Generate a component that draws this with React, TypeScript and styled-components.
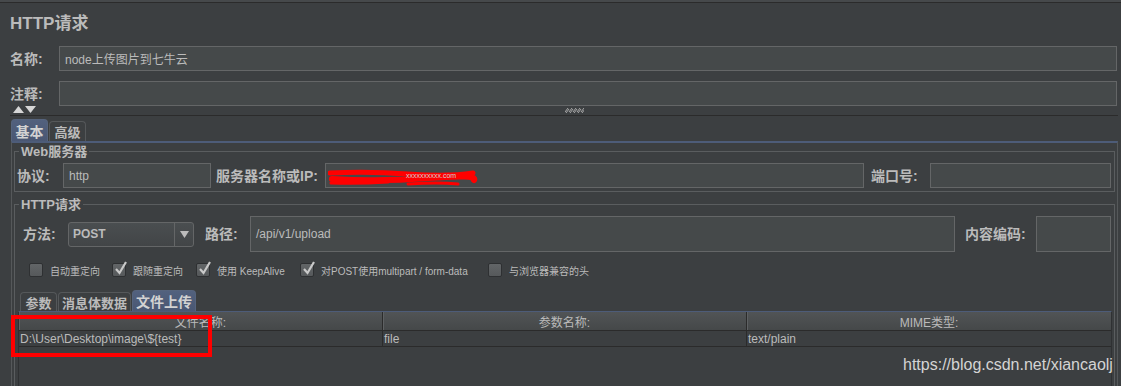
import styled, { createGlobalStyle } from 'styled-components';

const GlobalStyle = createGlobalStyle`
  html, body {
    margin: 0;
    padding: 0;
    background: #3c3f41;
  }
  body {
    font-family: "Liberation Sans", "Noto Sans CJK SC", sans-serif;
    color: #bbbbbb;
  }
  * { box-sizing: border-box; }
`;

const Page = styled.div`
  position: relative;
  width: 1121px;
  height: 386px;
  overflow: hidden;
  background: #3c3f41;
  box-shadow: inset 0 2px 0 #46494b, inset 0 3px 0 #2b2b2b;
`;

const Title = styled.div`
  margin: 12px 0 0 10px;
  height: 24px;
  line-height: 24px;
  font-size: 17px;
  font-weight: bold;
  color: #bbbbbb;
`;

const FieldRow = styled.div`
  display: flex;
  align-items: center;
  margin-top: 10px;
  padding: 0 4px 0 10px;
  height: 25px;
`;

const Label = styled.span<{ $w: number; $ml?: number }>`
  flex: none;
  width: ${({ $w }) => $w}px;
  margin-left: ${({ $ml }) => $ml ?? 0}px;
  margin-top: -2px;
  font-size: 14px;
  font-weight: bold;
  color: #bbbbbb;
  white-space: nowrap;
`;

const Input = styled.div<{ $w?: number; $h?: number }>`
  position: relative;
  flex: ${({ $w }) => ($w ? 'none' : '1')};
  width: ${({ $w }) => ($w ? `${$w}px` : 'auto')};
  height: ${({ $h }) => $h ?? 25}px;
  background: #45494a;
  border: 1px solid #646667;
  display: flex;
  align-items: center;
  padding-left: 5px;
  font-size: 12px;
  color: #bbbbbb;
  white-space: nowrap;
  overflow: hidden;
`;

const Splitter = styled.div`
  display: flex;
  align-items: center;
  margin-left: 10px;
  width: 1108px;
  height: 10px;
  border-bottom: 1px solid #2b2b2b;
`;

const Grip = styled.svg`
  margin-left: 528px;
`;

const TabStrip = styled.div<{ $ml: number; $h: number }>`
  display: flex;
  align-items: flex-end;
  margin: 0 0 0 ${({ $ml }) => $ml}px;
  height: ${({ $h }) => $h}px;
  gap: 1px;
`;

const Tab = styled.div<{ $w: number; $active?: boolean; $h: number }>`
  flex: none;
  width: ${({ $w }) => $w}px;
  height: ${({ $h, $active }) => ($active ? $h : $h - 2)}px;
  display: flex;
  align-items: center;
  justify-content: center;
  border: 1px solid ${({ $active }) => ($active ? '#56647d' : '#55585a')};
  border-bottom: none;
  border-radius: 4px 4px 0 0;
  background: ${({ $active }) =>
    $active ? 'linear-gradient(#52617e, #4a5773)' : '#3c3f41'};
  font-size: ${({ $active }) => ($active ? 14 : 13)}px;
  font-weight: bold;
  color: ${({ $active }) => ($active ? '#d2d2d2' : '#bbbbbb')};
`;

const TabPanel = styled.div`
  margin-left: 11px;
  width: 1107px;
  height: 260px;
  border-top: 2px solid #4d5c79;
  border-left: 1px solid #55585a;
  border-right: 1px solid #55585a;
  padding: 0 2px;
`;

const Group = styled.fieldset<{ $mt: number; $h?: number }>`
  margin: ${({ $mt }) => $mt}px 0 0 0;
  padding: 0 3px 3px 1px;
  min-width: 0;
  border: 1px solid #5a5d5f;
  height: ${({ $h }) => ($h ? `${$h}px` : 'auto')};
`;

const Legend = styled.legend`
  margin-left: 3px;
  padding: 0 2px;
  line-height: 15px;
  font-size: 13px;
  font-weight: bold;
  color: #bbbbbb;
`;

const GroupRow = styled.div<{ $mt: number; $h: number; $pl: number }>`
  display: flex;
  align-items: center;
  margin-top: ${({ $mt }) => $mt}px;
  height: ${({ $h }) => $h}px;
  padding-left: ${({ $pl }) => $pl}px;
`;

const Select = styled.div`
  flex: none;
  width: 126px;
  height: 25px;
  display: flex;
  border: 1px solid #646667;
  border-radius: 3px;
  background: linear-gradient(#4a4e50, #424547);
  font-size: 12px;
  font-weight: bold;
  color: #bbbbbb;
`;

const SelectValue = styled.div`
  flex: 1;
  padding: 4px 0 0 4px;
`;

const SelectArrow = styled.div`
  flex: none;
  width: 19px;
  border-left: 1px solid #646667;
  display: flex;
  align-items: center;
  justify-content: center;
`;

const CheckRow = styled.div`
  display: flex;
  align-items: center;
  margin-top: 11px;
  height: 14px;
  padding-left: 13px;
`;

const CheckItem = styled.label<{ $w?: number }>`
  flex: none;
  width: ${({ $w }) => ($w ? `${$w}px` : 'auto')};
  display: flex;
  align-items: center;
  gap: 7px;
  font-size: 10px;
  color: #bbbbbb;
  white-space: nowrap;
`;

const Box = styled.span`
  position: relative;
  flex: none;
  width: 14px;
  height: 14px;
  border: 1px solid #2e3032;
  border-radius: 2px;
  background: linear-gradient(#626567, #56595b);
`;

const Tick = styled.svg`
  position: absolute;
  left: 1px;
  top: -3px;
`;

const SubPanel = styled.div`
  margin-left: 2px;
  width: 1094px;
  height: 120px;
  border-top: 1px solid #4d5c79;
  border-left: 1px solid #2f3133;
  border-right: 1px solid #2f3133;
`;

const GridRow = styled.div<{ $head?: boolean }>`
  display: grid;
  grid-template-columns: 364px 364px 1fr;
  height: ${({ $head }) => ($head ? 19 : 16)}px;
  border-bottom: 1px solid #2b2b2b;
  background: ${({ $head }) => ($head ? 'linear-gradient(#515456, #454849)' : 'transparent')};
`;

const Cell = styled.div<{ $head?: boolean; $last?: boolean }>`
  display: flex;
  align-items: center;
  justify-content: ${({ $head }) => ($head ? 'center' : 'flex-start')};
  padding-left: ${({ $head }) => ($head ? 0 : 1)}px;
  border-right: ${({ $last }) => ($last ? 'none' : '1px solid #2b2b2b')};
  box-shadow: ${({ $head }) => ($head ? 'inset 1px 0 0 #5e6163' : 'none')};
  font-size: 12px;
  color: #bbbbbb;
  white-space: nowrap;
`;

const Annotation = styled.div`
  position: absolute;
  left: 11px;
  top: 315px;
  width: 201px;
  height: 42px;
  border: 4px solid #ff0000;
`;

const Watermark = styled.div`
  position: absolute;
  left: 903px;
  top: 356px;
  font-family: "Liberation Sans", Arial, sans-serif;
  font-size: 16px;
  color: #d4d4d4;
  white-space: nowrap;
`;

const Redaction = styled.svg`
  position: absolute;
  left: 2px;
  top: 5px;
`;

const Check = ({ checked, label, w }: { checked?: boolean; label: string; w?: number }) => (
  <CheckItem $w={w}>
    <Box>
      {checked && (
        <Tick width="14" height="15" viewBox="0 0 14 15">
          <path d="M2 8 L5.5 12 L12 1" fill="none" stroke="#c9c9c9" strokeWidth="2.2" />
        </Tick>
      )}
    </Box>
    {label}
  </CheckItem>
);

export default function App() {
  return (
    <Page>
      <GlobalStyle />
      <Title>HTTP请求</Title>
      <FieldRow>
        <Label $w={49}>名称:</Label>
        <Input>node上传图片到七牛云</Input>
      </FieldRow>
      <FieldRow>
        <Label $w={49}>注释:</Label>
        <Input />
      </FieldRow>
      <Splitter>
        <svg width="24" height="8" viewBox="0 0 24 8" style={{ marginLeft: 3, marginTop: -2 }}>
          <polygon points="0,7 5.5,0 11,7" fill="#d6d6d6" />
          <polygon points="12,0 23,0 17.5,7" fill="#d6d6d6" />
        </svg>
        <Grip width="19" height="5" viewBox="0 0 19 5">
          {[0, 4, 8, 12, 16].map((x) => (
            <path key={x} d="M0 4 L3 0 M1 5 L4 1" transform={`translate(${x} 0)`} stroke="#a9a9a9" strokeWidth="1" />
          ))}
        </Grip>
      </Splitter>
      <TabStrip $ml={11} $h={22} style={{ marginTop: 3 }}>
        <Tab $w={37} $h={22} $active>基本</Tab>
        <Tab $w={37} $h={22}>高级</Tab>
      </TabStrip>
      <TabPanel>
        <Group $mt={1}>
          <Legend>Web服务器</Legend>
          <GroupRow $mt={4} $h={25} $pl={1}>
            <Label $w={46}>协议:</Label>
            <Input $w={148}>http</Input>
            <Label $w={109} $ml={5}>服务器名称或IP:</Label>
            <Input>
              <Redaction width="150" height="18" viewBox="0 0 150 18">
                <path d="M2 4 Q40 2 80 5 T145 4" stroke="#ff0000" strokeWidth="5" fill="none" strokeLinecap="round" />
                <path d="M4 10 Q50 13 100 9 T146 11" stroke="#ff0000" strokeWidth="6" fill="none" strokeLinecap="round" />
                <path d="M3 14 Q30 15 60 13 M80 15 Q110 13 130 15" stroke="#ff0000" strokeWidth="3" fill="none" strokeLinecap="round" />
                <text x="78" y="9" fontSize="7" fill="#d0d0d0" fontFamily="Liberation Sans">xxxxxxxxxx.com</text>
              </Redaction>
            </Input>
            <Label $w={59} $ml={7}>端口号:</Label>
            <Input $w={181} />
          </GroupRow>
        </Group>
        <Group $mt={5} $h={240}>
          <Legend>HTTP请求</Legend>
          <GroupRow $mt={4} $h={36} $pl={7}>
            <Label $w={45}>方法:</Label>
            <Select>
              <SelectValue>POST</SelectValue>
              <SelectArrow>
                <svg width="9" height="7" viewBox="0 0 9 7">
                  <polygon points="0,0 9,0 4.5,7" fill="#bbbbbb" />
                </svg>
              </SelectArrow>
            </Select>
            <Label $w={45} $ml={11}>路径:</Label>
            <Input $h={36}>/api/v1/upload</Input>
            <Label $w={71} $ml={10}>内容编码:</Label>
            <Input $w={75} $h={36} />
          </GroupRow>
          <CheckRow>
            <Check w={83} label="自动重定向" />
            <Check w={84} checked label="跟随重定向" />
            <Check w={104} checked label="使用 KeepAlive" />
            <Check w={188} checked label="对POST使用multipart / form-data" />
            <Check label="与浏览器兼容的头" />
          </CheckRow>
          <TabStrip $ml={4} $h={21} style={{ marginTop: 13 }}>
            <Tab $w={37} $h={21}>参数</Tab>
            <Tab $w={73} $h={21}>消息体数据</Tab>
            <Tab $w={64} $h={21} $active>文件上传</Tab>
          </TabStrip>
          <SubPanel>
            <GridRow $head>
              <Cell $head>文件名称:</Cell>
              <Cell $head>参数名称:</Cell>
              <Cell $head $last>MIME类型:</Cell>
            </GridRow>
            <GridRow>
              <Cell>D:\User\Desktop\image\${'{test}'}</Cell>
              <Cell>file</Cell>
              <Cell $last>text/plain</Cell>
            </GridRow>
          </SubPanel>
        </Group>
      </TabPanel>
      <Annotation />
      <Watermark>https://blog.csdn.net/xiancaolj</Watermark>
    </Page>
  );
}
